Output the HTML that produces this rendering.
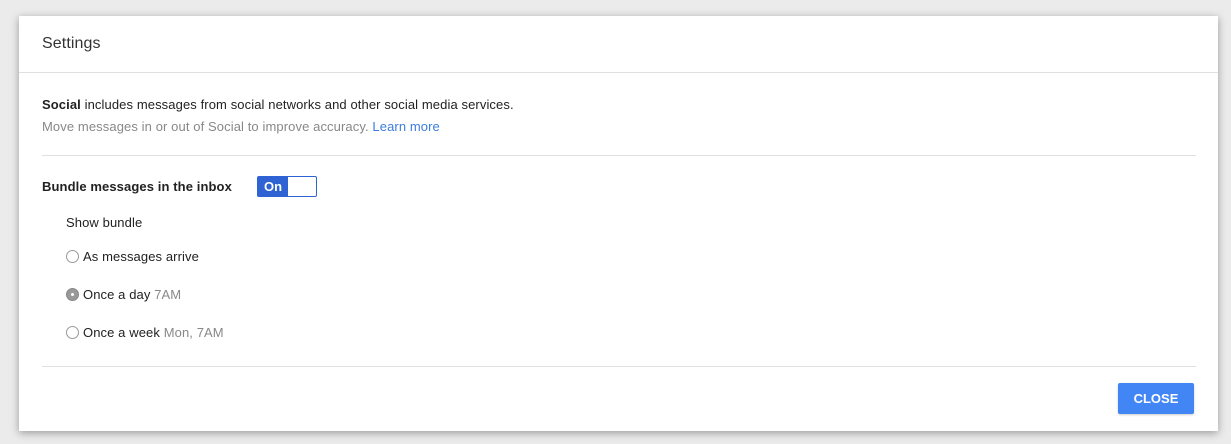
<!DOCTYPE html>
<html><head><style>
body{margin:0;width:1231px;height:444px;background:#ebebeb;font-family:"Liberation Sans",Arial,sans-serif;position:relative;overflow:hidden}
.dlg{position:absolute;left:19px;top:16px;width:1199px;height:415px;background:#fff;box-shadow:0 2px 8px rgba(0,0,0,.35)}
.t{position:absolute;font-size:13px;color:#222;white-space:nowrap;letter-spacing:0.1px}
.line{position:absolute;height:1px;background:#e0e0e0}
.radio{position:absolute;width:13px;height:13px;border:1px solid #999;border-radius:50%;background:#fff;box-sizing:border-box}
.g{color:#888}
</style></head><body>
<div class="dlg">
<div class="t" style="left:23px;top:19px;font-size:16px;color:#333">Settings</div>
<div class="line" style="left:0;top:56px;width:1199px"></div>
<div class="t" style="left:23px;top:81px"><b>Social</b> includes messages from social networks and other social media services.</div>
<div class="t g" style="left:23px;top:103px">Move messages in or out of Social to improve accuracy. <span style="color:#3b7ddd">Learn more</span></div>
<div class="line" style="left:23px;top:139px;width:1154px"></div>
<div class="t" style="left:23px;top:163px;font-weight:bold">Bundle messages in the inbox</div>
<div style="position:absolute;left:238px;top:160px;width:60px;height:21px;border:1px solid #2f63d4;border-radius:2px;background:#fff;box-sizing:border-box">
<div style="position:absolute;left:0;top:0;width:30px;height:19px;background:#2f63d4;color:#fff;font-weight:bold;font-size:13px;line-height:19px;text-align:center">On</div></div>
<div class="t" style="left:47px;top:199px">Show bundle</div>
<div class="radio" style="left:47px;top:234px"></div>
<div class="t" style="left:64px;top:233px">As messages arrive</div>
<div class="radio" style="left:47px;top:272px;background:#999;border-color:#888"><div style="position:absolute;left:4px;top:4px;width:3px;height:3px;border-radius:50%;background:#fff"></div></div>
<div class="t" style="left:64px;top:271px">Once a day <span class="g">7AM</span></div>
<div class="radio" style="left:47px;top:310px"></div>
<div class="t" style="left:64px;top:309px">Once a week <span class="g">Mon, 7AM</span></div>
<div class="line" style="left:23px;top:350px;width:1154px"></div>
<div style="position:absolute;left:1099px;top:367px;width:76px;height:31px;background:#4285f4;border-radius:2px;color:#fff;font-weight:bold;font-size:13px;line-height:31px;text-align:center;box-shadow:0 1px 2px rgba(0,0,0,.2)">CLOSE</div>
</div>
</body></html>
